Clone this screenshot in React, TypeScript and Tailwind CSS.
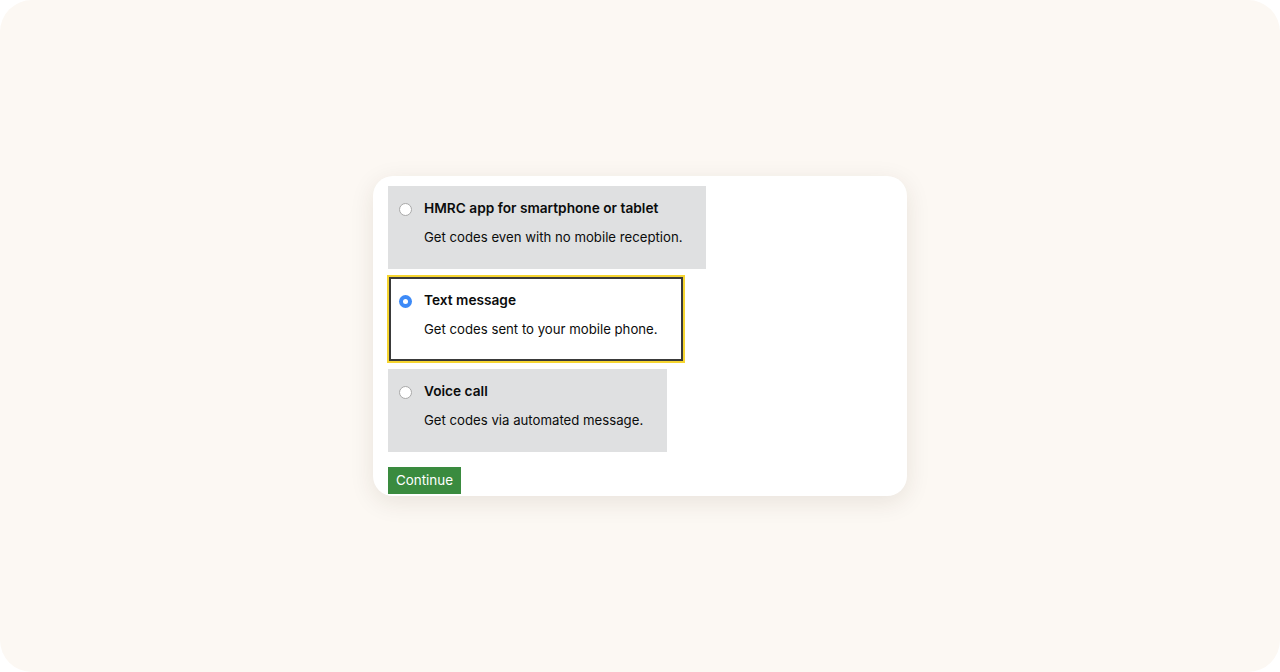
import React from "react";

function Radio({ checked }: { checked?: boolean }) {
  if (checked) {
    return (
      <div className="mt-[6px] flex h-[13px] w-[13px] shrink-0 items-center justify-center rounded-full bg-[#3d8af7]">
        <div className="h-[5px] w-[5px] rounded-full bg-white" />
      </div>
    );
  }
  return <div className="mt-[6px] h-[13px] w-[13px] shrink-0 rounded-full border border-[#a9a9a9] bg-white" />;
}

function OptionBody({ title, desc, checked }: { title: string; desc: string; checked?: boolean }) {
  return (
    <div className="flex items-start gap-[12px]">
      <Radio checked={checked} />
      <div className="flex flex-col gap-[7px]">
        <div className="text-[13.7px] font-semibold leading-[22px] text-[#0b0c0c]">{title}</div>
        <div className="text-[13.2px] leading-[22px] text-[#0b0c0c]">{desc}</div>
      </div>
    </div>
  );
}

export default function App() {
  return (
    <div className="bg-white">
      <div
        className="flex h-[672px] w-[1280px] items-center justify-center rounded-[32px] bg-[#fcf8f3]"
        style={{ fontFamily: "Inter, 'Noto Sans', sans-serif" }}
      >
        <div className="flex h-[320px] w-[534px] flex-col items-start overflow-hidden rounded-[20px] bg-white pl-[15px] pt-[10px] shadow-[0_6px_24px_rgba(60,40,20,0.10)]">
          <div className="bg-[#dfe0e1] pb-[21px] pl-[11px] pr-[24px] pt-[11px]">
            <OptionBody title="HMRC app for smartphone or tablet" desc="Get codes even with no mobile reception." />
          </div>
          <div className="-ml-[1px] mt-[6px] border-2 border-[#f6d531]">
            <div className="border-2 border-[#3a3a3a] bg-white pb-[19px] pl-[8px] pr-[23px] pt-[10px]">
              <OptionBody title="Text message" desc="Get codes sent to your mobile phone." checked />
            </div>
          </div>
          <div className="mt-[6px] bg-[#dfe0e1] pb-[21px] pl-[11px] pr-[24px] pt-[11px]">
            <OptionBody title="Voice call" desc="Get codes via automated message." />
          </div>
          <button className="mt-[15px] h-[27px] bg-[#3a8b3f] px-[8px] text-[13.4px] leading-[27px] text-white">
            Continue
          </button>
        </div>
      </div>
    </div>
  );
}
